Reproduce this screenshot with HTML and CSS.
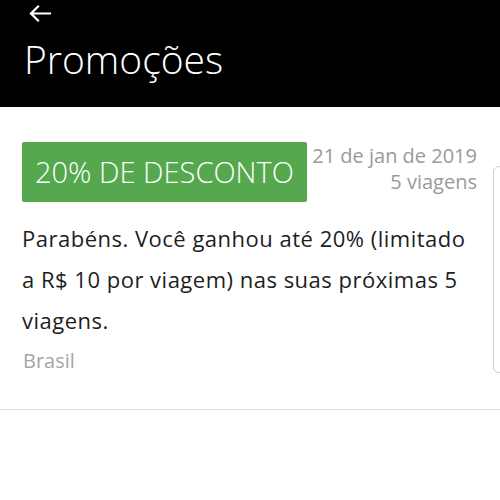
FILE: index.html
```html
<!DOCTYPE html>
<html lang="pt-BR">
<head>
<meta charset="utf-8">
<title>Promoções</title>
<link rel="stylesheet" href="styles.css">
</head>
<body>
<header class="topbar">
  <svg class="back" width="24" height="20" viewBox="0 0 24 20" aria-hidden="true">
    <path d="M22 9.5 H3 M10 2.5 L3 9.5 L10 16.5" fill="none" stroke="#fff" stroke-width="2.2" stroke-linecap="square"/>
  </svg>
  <h1 class="title">Promoções</h1>
</header>
<main class="card">
  <div class="card-head">
    <div class="badge">20% DE DESCONTO</div>
    <div class="meta">
      <div>21 de jan de 2019</div>
      <div>5 viagens</div>
    </div>
  </div>
  <p class="desc">Parabéns. Você ganhou até 20% (limitado a R$ 10 por viagem) nas suas próximas 5 viagens.</p>
  <p class="region">Brasil</p>
</main>
<div class="peek"></div>
</body>
</html>
```
FILE: styles.css
```css
html, body {
  margin: 0;
  padding: 0;
  background: #fff;
  font-family: "Open Sans", "Noto Sans", sans-serif;
}
.topbar {
  background: #000;
  height: 107px;
  box-sizing: border-box;
  padding: 4px 0 0 24px;
  display: flex;
  flex-direction: column;
}
.back {
  display: block;
  margin-left: 4px;
}
.title {
  margin: 15px 0 0 0;
  color: #fff;
  font-weight: 300;
  font-size: 39px;
  line-height: 40px;
}
.card {
  padding: 35px 23px 36px 22px;
  border-bottom: 1px solid #dedede;
}
.card-head {
  display: flex;
  justify-content: space-between;
  align-items: flex-start;
}
.badge {
  background: #56a84f;
  color: #fff;
  font-weight: 300;
  font-size: 29px;
  height: 60px;
  line-height: 60px;
  padding: 0 13px;
  border-radius: 2px;
  white-space: nowrap;
}
.meta {
  text-align: right;
  color: #9a9a9a;
  font-size: 20px;
  line-height: 26px;
  margin-top: 1px;
}
.desc {
  margin: 16px 0 0 0;
  font-size: 22px;
  letter-spacing: 0.5px;
  line-height: 41px;
  color: #1e1e1e;
}
.region {
  margin: 8px 0 0 1px;
  font-size: 20px;
  line-height: 24px;
  color: #a6a6a6;
}
.peek {
  position: absolute;
  left: 493px;
  top: 166px;
  width: 20px;
  height: 205px;
  border: 1px solid #cfcfcf;
  border-radius: 6px;
  background: #fff;
}
```
